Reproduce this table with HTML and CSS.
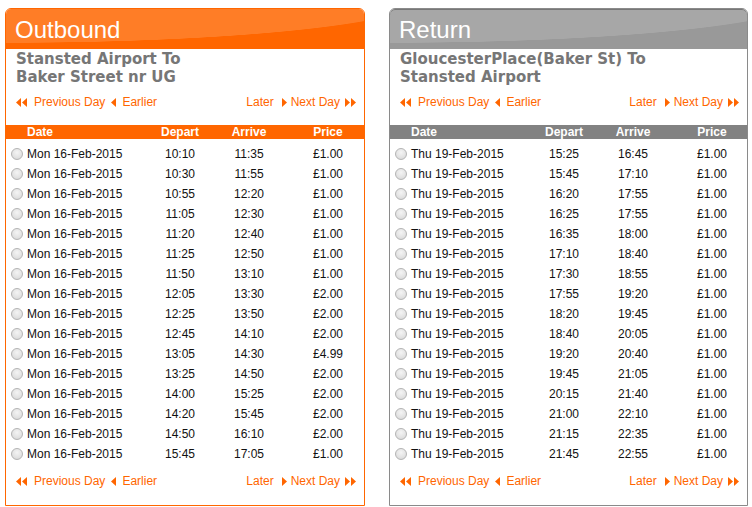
FILE: index.html
```html
<!DOCTYPE html>
<html>
<head>
<meta charset="utf-8">
<link rel="stylesheet" href="styles.css">
</head>
<body>
<div class="wrap">
  <section class="panel out">
    <h2 class="head">Outbound</h2>
    <div class="route">Stansted Airport To<br>Baker Street nr UG</div>
    <div class="nav">
      <div class="grp">
        <svg class="i2" viewBox="0 0 11 9"><polygon points="5,0 0,4.5 5,9"/><polygon points="11,0 6,4.5 11,9"/></svg>
        <a>Previous Day</a>
        <svg class="i1 sp" viewBox="0 0 5 9"><polygon points="5,0 0,4.5 5,9"/></svg>
        <a>Earlier</a>
      </div>
      <div class="grp">
        <a>Later</a>
        <svg class="i1 sp2" viewBox="0 0 5 9"><polygon points="0,0 5,4.5 0,9"/></svg>
        <a>Next Day</a>
        <svg class="i2 sp3" viewBox="0 0 11 9"><polygon points="0,0 5,4.5 0,9"/><polygon points="6,0 11,4.5 6,9"/></svg>
      </div>
    </div>
    <div class="thead"><span class="c1">Date</span><span>Depart</span><span>Arrive</span><span class="c4">Price</span></div>
    <div class="rows">
      <div class="row"><span class="c1"><i class="radio"></i>Mon 16-Feb-2015</span><span>10:10</span><span>11:35</span><span class="c4">£1.00</span></div>
      <div class="row"><span class="c1"><i class="radio"></i>Mon 16-Feb-2015</span><span>10:30</span><span>11:55</span><span class="c4">£1.00</span></div>
      <div class="row"><span class="c1"><i class="radio"></i>Mon 16-Feb-2015</span><span>10:55</span><span>12:20</span><span class="c4">£1.00</span></div>
      <div class="row"><span class="c1"><i class="radio"></i>Mon 16-Feb-2015</span><span>11:05</span><span>12:30</span><span class="c4">£1.00</span></div>
      <div class="row"><span class="c1"><i class="radio"></i>Mon 16-Feb-2015</span><span>11:20</span><span>12:40</span><span class="c4">£1.00</span></div>
      <div class="row"><span class="c1"><i class="radio"></i>Mon 16-Feb-2015</span><span>11:25</span><span>12:50</span><span class="c4">£1.00</span></div>
      <div class="row"><span class="c1"><i class="radio"></i>Mon 16-Feb-2015</span><span>11:50</span><span>13:10</span><span class="c4">£1.00</span></div>
      <div class="row"><span class="c1"><i class="radio"></i>Mon 16-Feb-2015</span><span>12:05</span><span>13:30</span><span class="c4">£2.00</span></div>
      <div class="row"><span class="c1"><i class="radio"></i>Mon 16-Feb-2015</span><span>12:25</span><span>13:50</span><span class="c4">£2.00</span></div>
      <div class="row"><span class="c1"><i class="radio"></i>Mon 16-Feb-2015</span><span>12:45</span><span>14:10</span><span class="c4">£2.00</span></div>
      <div class="row"><span class="c1"><i class="radio"></i>Mon 16-Feb-2015</span><span>13:05</span><span>14:30</span><span class="c4">£4.99</span></div>
      <div class="row"><span class="c1"><i class="radio"></i>Mon 16-Feb-2015</span><span>13:25</span><span>14:50</span><span class="c4">£2.00</span></div>
      <div class="row"><span class="c1"><i class="radio"></i>Mon 16-Feb-2015</span><span>14:00</span><span>15:25</span><span class="c4">£2.00</span></div>
      <div class="row"><span class="c1"><i class="radio"></i>Mon 16-Feb-2015</span><span>14:20</span><span>15:45</span><span class="c4">£2.00</span></div>
      <div class="row"><span class="c1"><i class="radio"></i>Mon 16-Feb-2015</span><span>14:50</span><span>16:10</span><span class="c4">£2.00</span></div>
      <div class="row"><span class="c1"><i class="radio"></i>Mon 16-Feb-2015</span><span>15:45</span><span>17:05</span><span class="c4">£1.00</span></div>
    </div>
    <div class="nav bottom">
      <div class="grp">
        <svg class="i2" viewBox="0 0 11 9"><polygon points="5,0 0,4.5 5,9"/><polygon points="11,0 6,4.5 11,9"/></svg>
        <a>Previous Day</a>
        <svg class="i1 sp" viewBox="0 0 5 9"><polygon points="5,0 0,4.5 5,9"/></svg>
        <a>Earlier</a>
      </div>
      <div class="grp">
        <a>Later</a>
        <svg class="i1 sp2" viewBox="0 0 5 9"><polygon points="0,0 5,4.5 0,9"/></svg>
        <a>Next Day</a>
        <svg class="i2 sp3" viewBox="0 0 11 9"><polygon points="0,0 5,4.5 0,9"/><polygon points="6,0 11,4.5 6,9"/></svg>
      </div>
    </div>
  </section>

  <section class="panel ret">
    <h2 class="head">Return</h2>
    <div class="route">GloucesterPlace(Baker St) To<br>Stansted Airport</div>
    <div class="nav">
      <div class="grp">
        <svg class="i2" viewBox="0 0 11 9"><polygon points="5,0 0,4.5 5,9"/><polygon points="11,0 6,4.5 11,9"/></svg>
        <a>Previous Day</a>
        <svg class="i1 sp" viewBox="0 0 5 9"><polygon points="5,0 0,4.5 5,9"/></svg>
        <a>Earlier</a>
      </div>
      <div class="grp">
        <a>Later</a>
        <svg class="i1 sp2" viewBox="0 0 5 9"><polygon points="0,0 5,4.5 0,9"/></svg>
        <a>Next Day</a>
        <svg class="i2 sp3" viewBox="0 0 11 9"><polygon points="0,0 5,4.5 0,9"/><polygon points="6,0 11,4.5 6,9"/></svg>
      </div>
    </div>
    <div class="thead"><span class="c1">Date</span><span>Depart</span><span>Arrive</span><span class="c4">Price</span></div>
    <div class="rows">
      <div class="row"><span class="c1"><i class="radio"></i>Thu 19-Feb-2015</span><span>15:25</span><span>16:45</span><span class="c4">£1.00</span></div>
      <div class="row"><span class="c1"><i class="radio"></i>Thu 19-Feb-2015</span><span>15:45</span><span>17:10</span><span class="c4">£1.00</span></div>
      <div class="row"><span class="c1"><i class="radio"></i>Thu 19-Feb-2015</span><span>16:20</span><span>17:55</span><span class="c4">£1.00</span></div>
      <div class="row"><span class="c1"><i class="radio"></i>Thu 19-Feb-2015</span><span>16:25</span><span>17:55</span><span class="c4">£1.00</span></div>
      <div class="row"><span class="c1"><i class="radio"></i>Thu 19-Feb-2015</span><span>16:35</span><span>18:00</span><span class="c4">£1.00</span></div>
      <div class="row"><span class="c1"><i class="radio"></i>Thu 19-Feb-2015</span><span>17:10</span><span>18:40</span><span class="c4">£1.00</span></div>
      <div class="row"><span class="c1"><i class="radio"></i>Thu 19-Feb-2015</span><span>17:30</span><span>18:55</span><span class="c4">£1.00</span></div>
      <div class="row"><span class="c1"><i class="radio"></i>Thu 19-Feb-2015</span><span>17:55</span><span>19:20</span><span class="c4">£1.00</span></div>
      <div class="row"><span class="c1"><i class="radio"></i>Thu 19-Feb-2015</span><span>18:20</span><span>19:45</span><span class="c4">£1.00</span></div>
      <div class="row"><span class="c1"><i class="radio"></i>Thu 19-Feb-2015</span><span>18:40</span><span>20:05</span><span class="c4">£1.00</span></div>
      <div class="row"><span class="c1"><i class="radio"></i>Thu 19-Feb-2015</span><span>19:20</span><span>20:40</span><span class="c4">£1.00</span></div>
      <div class="row"><span class="c1"><i class="radio"></i>Thu 19-Feb-2015</span><span>19:45</span><span>21:05</span><span class="c4">£1.00</span></div>
      <div class="row"><span class="c1"><i class="radio"></i>Thu 19-Feb-2015</span><span>20:15</span><span>21:40</span><span class="c4">£1.00</span></div>
      <div class="row"><span class="c1"><i class="radio"></i>Thu 19-Feb-2015</span><span>21:00</span><span>22:10</span><span class="c4">£1.00</span></div>
      <div class="row"><span class="c1"><i class="radio"></i>Thu 19-Feb-2015</span><span>21:15</span><span>22:35</span><span class="c4">£1.00</span></div>
      <div class="row"><span class="c1"><i class="radio"></i>Thu 19-Feb-2015</span><span>21:45</span><span>22:55</span><span class="c4">£1.00</span></div>
    </div>
    <div class="nav bottom">
      <div class="grp">
        <svg class="i2" viewBox="0 0 11 9"><polygon points="5,0 0,4.5 5,9"/><polygon points="11,0 6,4.5 11,9"/></svg>
        <a>Previous Day</a>
        <svg class="i1 sp" viewBox="0 0 5 9"><polygon points="5,0 0,4.5 5,9"/></svg>
        <a>Earlier</a>
      </div>
      <div class="grp">
        <a>Later</a>
        <svg class="i1 sp2" viewBox="0 0 5 9"><polygon points="0,0 5,4.5 0,9"/></svg>
        <a>Next Day</a>
        <svg class="i2 sp3" viewBox="0 0 11 9"><polygon points="0,0 5,4.5 0,9"/><polygon points="6,0 11,4.5 6,9"/></svg>
      </div>
    </div>
  </section>
</div>
</body>
</html>
```
FILE: styles.css
```css
* { box-sizing: border-box; }
html, body { margin: 0; background: #fff; }
body {
  padding: 8px 0 0 5px;
  font-family: "Liberation Sans", Arial, sans-serif;
  font-size: 12px;
  color: #111;
}
.wrap { display: flex; gap: 24px; align-items: flex-start; }
.panel {
  width: 360px;
  border: 1px solid #ff6600;
  border-radius: 6px 6px 0 0;
  padding-bottom: 16px;
  background: #fff;
}
.panel.ret { width: 359px; border-color: #8a8a8a; }

.head {
  margin: 0;
  height: 40px;
  padding: 7px 0 0 9px;
  font-weight: normal;
  font-size: 24px;
  line-height: 28px;
  color: #fff;
  border-radius: 5px 5px 0 0;
  background:
    radial-gradient(ellipse 420px 45px at 0 -11px, #ff7d26 99%, rgba(255,125,38,0) 100%),
    #ff6600;
}
.ret .head {
  background:
    radial-gradient(ellipse 420px 45px at 0 -11px, #a7a7a7 99%, rgba(167,167,167,0) 100%),
    #999999;
  box-shadow: inset 0 1px 0 #777;
}

.route {
  padding: 1px 0 0 10px;
  font-family: "DejaVu Sans", Verdana, sans-serif;
  font-weight: bold;
  font-size: 15px;
  line-height: 18px;
  color: #767676;
}

.nav {
  display: flex;
  justify-content: space-between;
  align-items: center;
  height: 16px;
  margin-top: 8px;
  padding: 0 8px 0 10px;
  color: #ff6600;
  line-height: 16px;
}
.nav.bottom { margin-top: 9px; }
.grp { display: flex; align-items: center; }
.nav a { color: #ff6600; text-decoration: none; }
.nav svg { fill: #ff6600; display: block; }
.i2 { width: 11px; height: 9px; margin-right: 7px; }
.i1 { width: 5px; height: 9px; }
.sp { margin: 0 6px 0 6px; }
.sp2 { margin: 0 4px 0 8px; }
.sp3 { margin: 0 0 0 5px; }

.thead, .row {
  display: grid;
  grid-template-columns: 140px 68px 70px 80px;
  text-align: center;
}
.thead {
  margin-top: 15px;
  height: 14px;
  line-height: 14px;
  background: #ff6600;
  color: #fff;
  font-weight: bold;
}
.ret .thead { background: #828282; }
.thead .c1 { text-align: left; padding-left: 21px; }
.rows { padding-top: 5px; }
.row { height: 20px; line-height: 20px; }
.row .c1 {
  text-align: left;
  padding-left: 5px;
  display: flex;
  align-items: center;
}
.c4 { padding-left: 8px; }
.radio {
  display: inline-block;
  width: 12px;
  height: 12px;
  border-radius: 50%;
  border: 1px solid #b4b4b4;
  background: radial-gradient(circle at 50% 35%, #f4f4f4 0%, #e2e2e2 60%, #d2d2d2 100%);
  margin-right: 4px;
  flex: none;
}
```
